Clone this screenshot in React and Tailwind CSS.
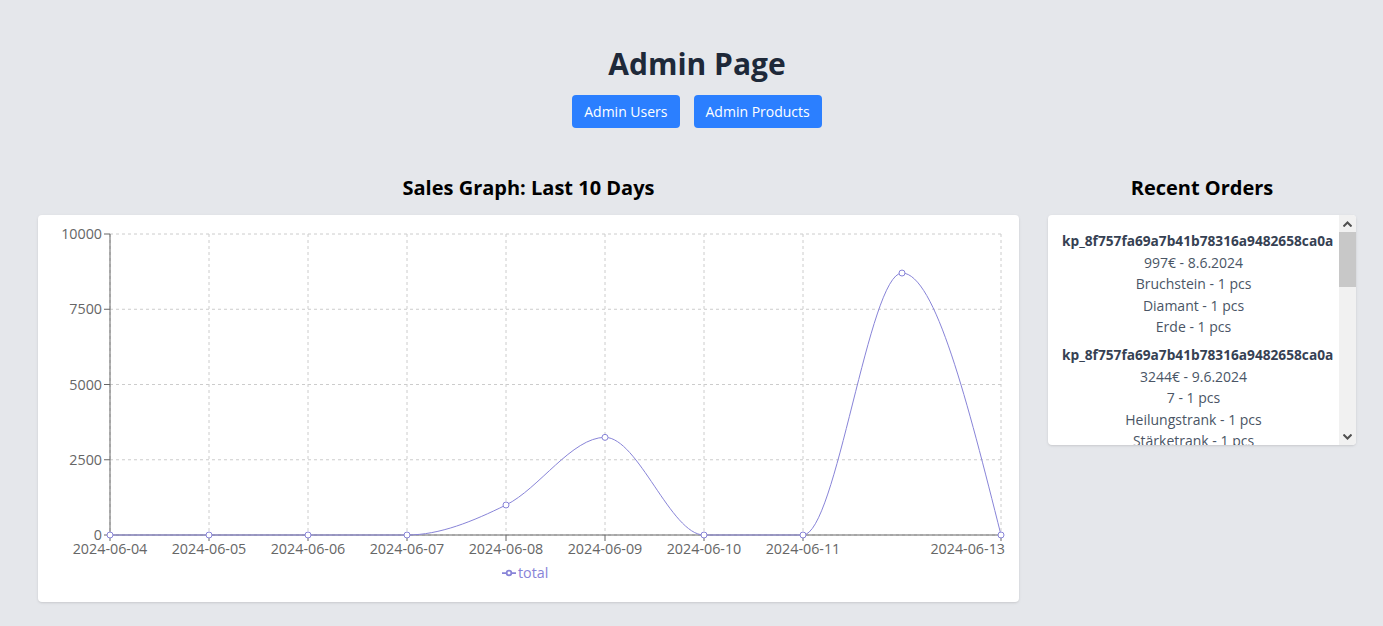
import React from 'react';

const sales = [
	{ date: '2024-06-04', total: 0 },
	{ date: '2024-06-05', total: 0 },
	{ date: '2024-06-06', total: 0 },
	{ date: '2024-06-07', total: 0 },
	{ date: '2024-06-08', total: 997 },
	{ date: '2024-06-09', total: 3244 },
	{ date: '2024-06-10', total: 0 },
	{ date: '2024-06-11', total: 0 },
	{ date: '2024-06-12', total: 8703 },
	{ date: '2024-06-13', total: 0 },
];

const orders = [
	{ id: 'kp_8f757fa69a7b41b78316a9482658ca0a', total: '997€ - 8.6.2024', items: ['Bruchstein - 1 pcs', 'Diamant - 1 pcs', 'Erde - 1 pcs'] },
	{ id: 'kp_8f757fa69a7b41b78316a9482658ca0a', total: '3244€ - 9.6.2024', items: ['7 - 1 pcs', 'Heilungstrank - 1 pcs', 'Stärketrank - 1 pcs'] },
	{ id: 'kp_8f757fa69a7b41b78316a9482658ca0a', total: '4520€ - 12.6.2024', items: ['Netherit - 1 pcs', 'Smaragd - 2 pcs'] },
	{ id: 'kp_8f757fa69a7b41b78316a9482658ca0a', total: '4183€ - 12.6.2024', items: ['Diamantschwert - 1 pcs', 'Goldbarren - 3 pcs', 'Eisenbarren - 2 pcs'] },
	{ id: 'kp_8f757fa69a7b41b78316a9482658ca0a', total: '125€ - 12.6.2024', items: ['Holz - 5 pcs'] },
];

// Koordinaten des Diagramms (relativ zur Karte)
const X0 = 72;
const STEP = 99;
const TOP = 19;
const BOTTOM = 320;
const xOf = (i) => X0 + STEP * i;
const yOf = (v) => BOTTOM - (v / 10000) * (BOTTOM - TOP);

// monotoneX wie in d3
function monotonePath(pts) {
	const n = pts.length;
	const t = new Array(n).fill(0);
	const sg = (x) => (x < 0 ? -1 : 1);
	for (let i = 1; i < n - 1; i++) {
		const h0 = pts[i][0] - pts[i - 1][0];
		const h1 = pts[i + 1][0] - pts[i][0];
		const s0 = (pts[i][1] - pts[i - 1][1]) / h0;
		const s1 = (pts[i + 1][1] - pts[i][1]) / h1;
		const p = (s0 * h1 + s1 * h0) / (h0 + h1);
		t[i] = (sg(s0) + sg(s1)) * Math.min(Math.abs(s0), Math.abs(s1), 0.5 * Math.abs(p)) || 0;
	}
	const hA = pts[1][0] - pts[0][0];
	t[0] = (3 * (pts[1][1] - pts[0][1]) / hA - t[1]) / 2;
	const hB = pts[n - 1][0] - pts[n - 2][0];
	t[n - 1] = (3 * (pts[n - 1][1] - pts[n - 2][1]) / hB - t[n - 2]) / 2;
	let d = `M${pts[0][0]},${pts[0][1]}`;
	for (let i = 0; i < n - 1; i++) {
		const [x0, y0] = pts[i];
		const [x1, y1] = pts[i + 1];
		const dx = (x1 - x0) / 3;
		d += `C${x0 + dx},${y0 + dx * t[i]},${x1 - dx},${y1 - dx * t[i + 1]},${x1},${y1}`;
	}
	return d;
}

function SalesChart() {
	const pts = sales.map((s, i) => [xOf(i), yOf(s.total)]);
	const shown = [0, 1, 2, 3, 4, 5, 6, 7, 9];
	const yTicks = [0, 2500, 5000, 7500, 10000];
	const font = { fontFamily: '"Open Sans", sans-serif', fontSize: 14.3 };

	return (
		<svg width="981" height="387" className="block">
			{/* Raster */}
			<g stroke="#ccc" strokeDasharray="3 3">
				{yTicks.map(v => (
					<line key={v} x1={X0} x2={xOf(9)} y1={yOf(v)} y2={yOf(v)} />
				))}
				{shown.map(i => (
					<line key={i} x1={xOf(i)} x2={xOf(i)} y1={TOP} y2={BOTTOM} />
				))}
			</g>

			{/* Y-Achse */}
			<line x1={X0} x2={X0} y1={TOP} y2={BOTTOM} stroke="#666" />
			{yTicks.map(v => (
				<g key={v}>
					<line x1={X0 - 6} x2={X0} y1={yOf(v)} y2={yOf(v)} stroke="#666" />
					<text x={X0 - 8} y={yOf(v) + 5} textAnchor="end" fill="#666" style={font}>{v}</text>
				</g>
			))}

			{/* X-Achse */}
			<line x1={X0} x2={xOf(9)} y1={BOTTOM} y2={BOTTOM} stroke="#666" />
			{shown.map(i => (
				<g key={i}>
					<line x1={xOf(i)} x2={xOf(i)} y1={BOTTOM} y2={BOTTOM + 6} stroke="#666" />
					<text
						x={i === 9 ? xOf(i) + 4 : xOf(i)}
						y={BOTTOM + 19}
						textAnchor={i === 9 ? 'end' : 'middle'}
						fill="#666"
						style={font}
					>
						{sales[i].date}
					</text>
				</g>
			))}

			{/* Linie */}
			<path d={monotonePath(pts)} fill="none" stroke="#8884d8" strokeWidth="1" />
			{pts.map(([x, y], i) => (
				<circle key={i} cx={x} cy={y} r="3" fill="#fff" stroke="#8884d8" />
			))}

			{/* Legende */}
			<svg x="464" y="351" width="14" height="14" viewBox="0 0 32 32">
				<path
					d="M0,16h10.667A5.333,5.333,0,1,1,21.333,16H32M21.333,16A5.333,5.333,0,1,1,10.667,16"
					fill="none"
					stroke="#8884d8"
					strokeWidth="4"
				/>
			</svg>
			<text x="480" y="363" fill="#8884d8" style={font}>total</text>
		</svg>
	);
}

// Nachbildung der klassischen Scrollbar
function FakeScrollbar() {
	return (
		<div className="w-[17px] shrink-0 bg-[#f1f1f1] flex flex-col">
			<div className="h-[17px] flex items-center justify-center">
				<svg width="9" height="6" viewBox="0 0 9 6"><path d="M0.5 5.5 L4.5 1.5 L8.5 5.5" fill="none" stroke="#505050" strokeWidth="2" /></svg>
			</div>
			<div className="h-[55px] bg-[#c8c8c8]" />
			<div className="flex-1" />
			<div className="h-[17px] flex items-center justify-center">
				<svg width="9" height="6" viewBox="0 0 9 6"><path d="M0.5 0.5 L4.5 4.5 L8.5 0.5" fill="none" stroke="#505050" strokeWidth="2" /></svg>
			</div>
		</div>
	);
}

export default function App() {
	return (
		<div className="min-h-screen bg-[#e5e7eb] pt-[46px]" style={{ fontFamily: '"Open Sans", sans-serif' }}>
			<div className="pl-[11px]">
				<h1 className="text-center text-3xl font-bold text-gray-800">Admin Page</h1>

				<div className="flex justify-center gap-[14px] mt-[13px]">
					<button className="h-[33px] px-3 rounded bg-blue-500 text-white text-sm">Admin Users</button>
					<button className="h-[33px] px-3 rounded bg-blue-500 text-white text-sm">Admin Products</button>
				</div>
			</div>

			<div className="flex pl-[38px] gap-[29px] mt-[46px]">
				{/* Verkaufsdiagramm */}
				<div className="w-[981px]">
					<h2 className="text-center text-xl font-bold text-black">Sales Graph: Last 10 Days</h2>
					<div className="mt-[13px] bg-white rounded shadow h-[387px]">
						<SalesChart />
					</div>
				</div>

				{/* Letzte Bestellungen */}
				<div className="w-[308px]">
					<h2 className="text-center text-xl font-bold text-black">Recent Orders</h2>
					<div className="mt-[13px] bg-white rounded shadow h-[230px] flex overflow-hidden">
						<div className="flex-1 min-w-0 overflow-y-auto [scrollbar-width:none] pt-[15px] px-[14px]">
							{orders.map((order, idx) => (
								<div key={idx} className="text-center text-sm leading-[21.5px] mb-[6.5px]">
									<p className="font-bold text-gray-700 whitespace-nowrap text-[13.7px]">{order.id}</p>
									<p className="text-gray-600">{order.total}</p>
									{order.items.map(item => (
										<p key={item} className="text-gray-600">{item}</p>
									))}
								</div>
							))}
						</div>
						<FakeScrollbar />
					</div>
				</div>
			</div>
		</div>
	);
}
